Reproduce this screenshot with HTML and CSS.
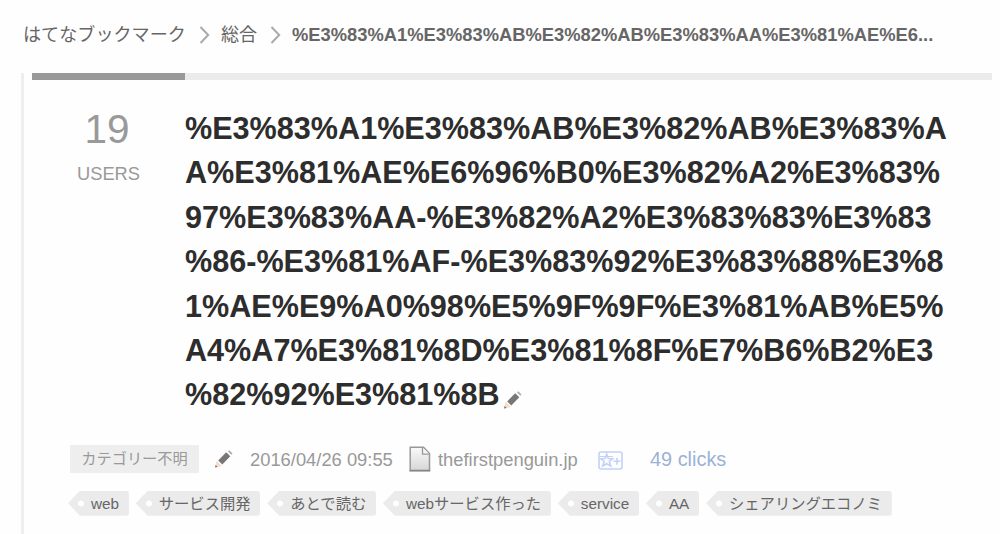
FILE: index.html
```html
<!DOCTYPE html>
<html lang="ja">
<head>
  <meta charset="UTF-8">
  <title>はてなブックマーク</title>
  <link rel="stylesheet" href="styles.css">
</head>
<body>
  <nav class="breadcrumb">
    <span class="crumb">はてなブックマーク</span>
    <svg class="arrow" width="12" height="20" viewBox="0 0 12 20"><path d="M1.5 2 L9.2 10 L1.5 18"/></svg>
    <span class="crumb crumb-category">総合</span>
    <svg class="arrow" width="12" height="20" viewBox="0 0 12 20"><path d="M1.5 2 L9.2 10 L1.5 18"/></svg>
    <strong class="crumb-current">%E3%83%A1%E3%83%AB%E3%82%AB%E3%83%AA%E3%81%AE%E6...</strong>
  </nav>

  <main class="entry">
    <div class="entry-body">
      <div class="bar"><div class="bar-active"></div></div>
      <div class="entry-head">
        <div class="users">
          <span class="users-count">19</span>
          <span class="users-label">USERS</span>
        </div>
        <h1 class="title">%E3%83%A1%E3%83%AB%E3%82%AB%E3%83%A<br>A%E3%81%AE%E6%96%B0%E3%82%A2%E3%83%<br>97%E3%83%AA-%E3%82%A2%E3%83%83%E3%83<br>%86-%E3%81%AF-%E3%83%92%E3%83%88%E3%8<br>1%AE%E9%A0%98%E5%9F%9F%E3%81%AB%E5%<br>A4%A7%E3%81%8D%E3%81%8F%E7%B6%B2%E3<br>%82%92%E3%81%8B<svg class="pencil title-pencil" width="20" height="20" viewBox="0 0 20 20"><path class="wood" d="M1 18.5 L2.6 11.8 L8 17 Z"/><path class="lead" d="M1 18.5 L1.6 16 L3.6 17.9 Z"/><path class="shaft" d="M4.2 11.4 L12.2 3.3 L16.3 7.2 L8.3 15.4 Z"/><path class="cap" d="M14 2.5 L15.3 1.3 L18.5 4.4 L17.3 5.7 Z"/></svg></h1>
      </div>

      <div class="meta">
        <span class="category">カテゴリー不明</span>
        <svg class="pencil" width="20" height="20" viewBox="0 0 20 20"><path class="wood" d="M1 18.5 L2.6 11.8 L8 17 Z"/><path class="lead" d="M1 18.5 L1.6 16 L3.6 17.9 Z"/><path class="shaft" d="M4.2 11.4 L12.2 3.3 L16.3 7.2 L8.3 15.4 Z"/><path class="cap" d="M14 2.5 L15.3 1.3 L18.5 4.4 L17.3 5.7 Z"/></svg>
        <span class="date">2016/04/26 09:55</span>
        <svg class="page-icon" width="22" height="26" viewBox="0 0 22 26">
          <defs>
            <linearGradient id="paper" x1="0" y1="0" x2="0" y2="1">
              <stop offset="0" stop-color="#fafafa"/>
              <stop offset="1" stop-color="#d6d6d6"/>
            </linearGradient>
          </defs>
          <path d="M1.2 1.2 H14.5 L20.5 7.5 V24.5 H1.2 Z" fill="url(#paper)" stroke="#999" stroke-width="1.5"/>
          <path d="M13.5 1.2 V8.2 H20.5" fill="#f4f4f4" stroke="#999" stroke-width="1.3"/>
          <path d="M.5 24.7 H21.2" stroke="#858585" stroke-width="1.5"/>
        </svg>
        <span class="domain">thefirstpenguin.jp</span>
        <svg class="star-icon" width="25" height="19" viewBox="0 0 25 19">
          <rect x="1" y="1" width="23" height="17" rx="2"/>
          <path d="M8.7 3.5 L10.3 7.5 L14.6 7.8 L11.3 10.5 L12.7 15 L8.7 12.7 L4.7 15 L6.1 10.5 L2.8 7.8 L7.1 7.5 Z"/>
          <path d="M15.5 10.3 H22.5 M19 6.8 V13.8"/>
          <path class="faint" d="M2 5.5 H7 M10 5.5 H15 M8.7 1 V4"/>
        </svg>
        <span class="clicks">49 clicks</span>
      </div>

      <ul class="tags">
        <li>web</li>
        <li>サービス開発</li>
        <li>あとで読む</li>
        <li>webサービス作った</li>
        <li>service</li>
        <li>AA</li>
        <li>シェアリングエコノミ</li>
      </ul>
    </div>
  </main>
</body>
</html>
```

FILE: styles.css
```css
body {
  margin: 0;
  height: 534px;
  overflow: hidden;
  background: #fefefe;
  color: #666;
  font-family: "Liberation Sans", "Noto Sans CJK JP", sans-serif;
  display: flex;
  flex-direction: column;
}
.breadcrumb {
  height: 73px;
  padding: 0 0 4px 23px;
  box-sizing: border-box;
  display: flex;
  align-items: center;
  flex-shrink: 0;
  font-size: 18.1px;
  line-height: 26px;
  white-space: nowrap;
}
.crumb {
  width: 163px;
}
.crumb-category {
  width: 36px;
}
.arrow {
  margin: 0 10px 0 13px;
  fill: none;
  stroke: #aaa;
  stroke-width: 2;
}
.crumb-current {
  font-size: 18.35px;
}
.entry {
  flex: 1;
  margin-left: 21px;
  border-left: 3px solid #eee;
  padding-left: 8px;
}
.entry-body {
  width: 960px;
}
.bar {
  height: 7px;
  background: #ebebeb;
}
.bar-active {
  width: 153px;
  height: 7px;
  background: #999;
}
.entry-head {
  display: flex;
  padding-top: 26px;
}
.users {
  width: 153px;
  display: flex;
  flex-direction: column;
  align-items: center;
  color: #999;
}
.users-count {
  margin-right: 3px;
  font-size: 40.5px;
  line-height: 46px;
}
.users-label {
  margin-top: 10px;
  font-size: 18.3px;
  line-height: 24px;
}
.title {
  margin: 0;
  color: #2d2d2d;
  font-size: 30.6px;
  line-height: 44.4px;
  white-space: nowrap;
}
.pencil .wood {
  fill: #f7dccb;
}
.pencil .lead,
.pencil .shaft {
  fill: #777;
}
.pencil .cap {
  fill: #aaa;
}
.title-pencil {
  margin-left: 3px;
  vertical-align: -5px;
}
.meta {
  display: flex;
  align-items: center;
  height: 28px;
  margin: 28px 0 0 38px;
  color: #999;
  font-size: 18.35px;
  white-space: nowrap;
}
.category {
  width: 129px;
  height: 28px;
  margin-right: 15px;
  background: #eee;
  font-size: 15.2px;
  line-height: 28px;
  text-align: center;
}
.date {
  width: 143px;
  margin: 3px 16px 0 16px;
}
.domain {
  width: 140px;
  margin: 3px 20px 0 7px;
}
.star-icon {
  fill: none;
  stroke: #c3d1f7;
  stroke-width: 1.6;
  margin-top: 3px;
}
.star-icon .faint {
  stroke-width: 1;
}
.clicks {
  margin: 2px 0 0 27px;
  color: #9ab2d6;
  font-size: 19.9px;
}
.tags {
  display: flex;
  gap: 6.9px;
  margin: 18px 0 0 36px;
  padding: 0;
  list-style: none;
  font-size: 15.3px;
  line-height: 25px;
  white-space: nowrap;
}
.tags li {
  height: 25px;
  padding: 0 9.8px 0 23px;
  border-radius: 3px;
  background: radial-gradient(circle at 13px 12.5px, #fefefe 2.7px, #ebebeb 3.3px);
  clip-path: polygon(0 50%, 12px 0, 100% 0, 100% 100%, 12px 100%);
}
```
